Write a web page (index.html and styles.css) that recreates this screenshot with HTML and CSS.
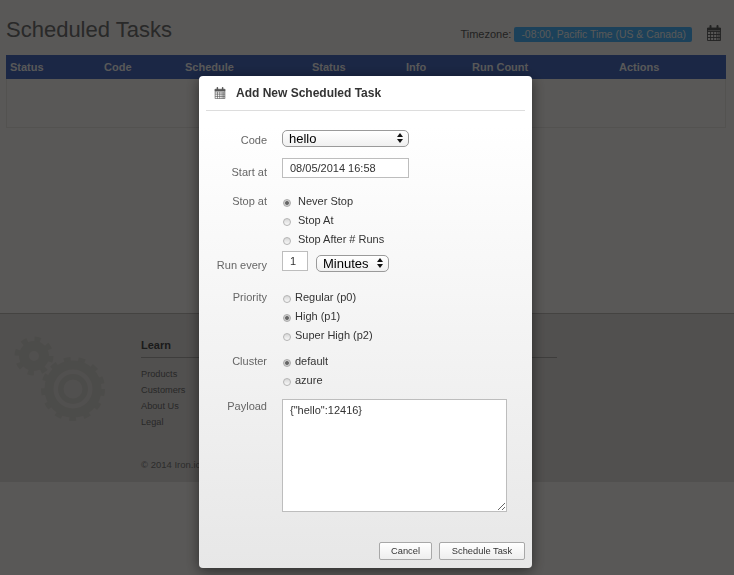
FILE: index.html
```html
<!DOCTYPE html>
<html lang="en">
<head>
  <meta charset="UTF-8">
  <title>Scheduled Tasks</title>
  <link rel="stylesheet" href="styles.css">
</head>
<body>

<div class="page">
  <div class="page-head">
    <h1>Scheduled Tasks</h1>
    <div class="tz">
      <span class="tz-label">Timezone:</span>
      <span class="tz-badge">-08:00, Pacific Time (US &amp; Canada)</span>
      <svg class="cal cal-page" viewBox="0 0 16 16"><use href="#calendar"></use></svg>
    </div>
  </div>

  <table class="tasks">
    <thead>
      <tr>
        <th class="c-status">Status</th>
        <th class="c-code">Code</th>
        <th class="c-schedule">Schedule</th>
        <th class="c-status">Status</th>
        <th class="c-info">Info</th>
        <th class="c-runs">Run Count</th>
        <th class="c-actions">Actions</th>
      </tr>
    </thead>
    <tbody>
      <tr><td colspan="7"></td></tr>
    </tbody>
  </table>
</div>

<footer class="foot">
  <svg class="gears" viewBox="0 0 110 90">
    <g class="gear">
      <circle cx="34" cy="23" r="16.5" class="teeth small-teeth"></circle>
      <circle cx="34" cy="23" r="10" class="body small-body"></circle>
    </g>
    <g class="gear">
      <circle cx="73" cy="56" r="28.5" class="teeth big-teeth"></circle>
      <circle cx="73" cy="56" r="24" class="body big-body"></circle>
      <circle cx="73" cy="56" r="12.2" class="body big-ring"></circle>
    </g>
  </svg>
  <div class="foot-col">
    <h4>Learn</h4>
    <ul>
      <li>Products</li>
      <li>Customers</li>
      <li>About Us</li>
      <li>Legal</li>
    </ul>
    <p class="copy">© 2014 Iron.io</p>
  </div>
</footer>

<div class="backdrop"></div>

<div class="modal">
  <div class="modal-head">
    <svg class="cal cal-modal" viewBox="0 0 16 16"><use href="#calendar"></use></svg>
    <h3>Add New Scheduled Task</h3>
  </div>

  <form class="form">
    <label class="lbl lbl-code">Code</label>
    <div class="ctl">
      <div class="sel sel-code">hello<span class="arrows"></span></div>
    </div>

    <label class="lbl lbl-start">Start at</label>
    <div class="ctl"><input class="txt txt-date" type="text" value="08/05/2014 16:58"></div>

    <label class="lbl lbl-plain">Stop at</label>
    <div class="ctl radios radios-wide">
      <label><input type="radio" name="stop" checked>Never Stop</label>
      <label><input type="radio" name="stop">Stop At</label>
      <label><input type="radio" name="stop">Stop After # Runs</label>
    </div>

    <label class="lbl lbl-run">Run every</label>
    <div class="ctl ctl-run">
      <input class="txt txt-num" type="text" value="1">
      <div class="sel sel-unit">Minutes<span class="arrows"></span></div>
    </div>

    <label class="lbl lbl-plain">Priority</label>
    <div class="ctl radios">
      <label><input type="radio" name="prio">Regular (p0)</label>
      <label><input type="radio" name="prio" checked>High (p1)</label>
      <label><input type="radio" name="prio">Super High (p2)</label>
    </div>

    <label class="lbl lbl-plain">Cluster</label>
    <div class="ctl radios">
      <label><input type="radio" name="cluster" checked>default</label>
      <label><input type="radio" name="cluster">azure</label>
    </div>

    <label class="lbl lbl-payload">Payload</label>
    <div class="ctl"><textarea class="payload">{"hello":12416}</textarea></div>
  </form>

  <div class="modal-foot">
    <button class="btn btn-cancel" type="button">Cancel</button>
    <button class="btn btn-go" type="button">Schedule Task</button>
  </div>
</div>

<svg class="defs" width="0" height="0">
  <symbol id="calendar" viewBox="0 0 16 16">
    <path d="M1.5 3h13v12.5h-13z M1.5 6.5h13 M1.5 9.5h13 M1.5 12.5h13 M4.6 6.5v9 M7.7 6.5v9 M10.8 6.5v9 M13 6.5v9" fill="none" stroke="currentColor" stroke-width="0.9"></path>
    <path d="M1 3h14v2.5H1z" fill="currentColor"></path>
    <path d="M4.5 1v3 M11.5 1v3" stroke="currentColor" stroke-width="2" stroke-linecap="round"></path>
  </symbol>
</svg>

</body>
</html>
```

FILE: styles.css
```css
html, body {
  margin: 0;
  height: 100%;
}
body {
  background-color: #dfdcd9;
  color: #333;
  font-family: "Liberation Sans", Arial, sans-serif;
  font-size: 11px;
  overflow: hidden;
}

.defs { position: absolute; }

.page { padding: 0 8px 0 6px; }

.page-head {
  display: flex;
  justify-content: space-between;
  height: 55px;
}
h1 {
  margin: 16px 0 0;
  font-size: 22px;
  line-height: 28px;
  font-weight: normal;
  color: #666;
}
.tz {
  display: flex;
  align-items: center;
  height: 15px;
  margin-top: 27px;
  gap: 3px;
  color: #555;
}
.tz-label { margin-bottom: 2px; }
.tz-badge {
  background-color: #48a4e0;
  color: #ddd;
  padding: 1px 6px 1px 7px;
  height: 13px;
  line-height: 13px;
  font-size: 10.4px;
  border-radius: 2px;
}
.cal { color: #333; display: block; }
.cal-page { width: 16px; height: 16px; margin: -4px 4px 0 11px; color: #555; }

.tasks {
  width: 720px;
  table-layout: fixed;
  border-collapse: separate;
  border-spacing: 0;
}
.tasks th {
  background-color: #4462ac;
  color: #ddd;
  font-size: 11px;
  text-align: left;
  padding: 0 4px;
  height: 24px;
}
.tasks td {
  height: 48px;
  padding: 0;
  border: 1px solid #cfccc9;
  border-top: none;
}
.c-status { width: 86px; }
.c-code { width: 73px; }
.c-schedule { width: 119px; }
.c-info { width: 58px; }
.c-runs { width: 139px; }

.foot {
  position: relative;
  display: flex;
  margin-top: 185px;
  height: 168px;
  background-color: #cbc8c5;
  border-top: 1px solid #aaa7a4;
}
.gears {
  width: 110px;
  height: 90px;
  margin-top: 19px;
  margin-right: 31px;
  flex: none;
}
.gear circle { fill: none; stroke: #bfbdb8; }
.small-teeth { stroke-width: 6; stroke-dasharray: 5.8 7.16; }
.big-teeth { stroke-width: 7; stroke-dasharray: 6.5 7.42; }
.small-body { stroke-width: 10; }
.big-body { stroke-width: 9; }
.big-ring { stroke-width: 5.5; }

.foot-col { width: 416px; padding-top: 25px; }
.foot-col h4 {
  margin: 0;
  font-size: 11px;
  line-height: 13px;
  color: #444;
  padding-bottom: 5px;
  border-bottom: 1px solid #9c9a97;
}
.foot-col ul {
  list-style: none;
  margin: 8px 0 0;
  padding: 0;
}
.foot-col li {
  font-size: 9.2px;
  line-height: 16px;
  color: #666;
}
.copy {
  margin: 29px 0 0;
  font-size: 9.5px;
  color: #707070;
}

.backdrop {
  position: fixed;
  left: 0;
  top: 0;
  right: 0;
  bottom: 0;
  background-color: rgba(0, 0, 0, 0.6);
}

.modal {
  position: fixed;
  left: 199px;
  top: 76px;
  width: 333px;
  height: 492px;
  box-sizing: border-box;
  padding: 0 7px;
  border-radius: 4px;
  background: linear-gradient(#fff 50px, #e7e7e7);
  box-shadow: 0 3px 14px rgba(0, 0, 0, 0.5);
}
.modal-head {
  display: flex;
  align-items: center;
  gap: 10px;
  height: 34px;
  padding-left: 8px;
  border-bottom: 1px solid #ddd;
}
.modal-head h3 {
  margin: 0;
  font-size: 12px;
  font-weight: bold;
  color: #333;
}
.cal-modal { width: 12px; height: 12px; color: #555; }

.form {
  display: grid;
  grid-template-columns: 61px 1fr;
  column-gap: 15px;
  grid-template-rows: 28px 34px 59px 37px 64px 47px 113px;
  margin-top: 19px;
}
.lbl {
  text-align: right;
  color: #666;
  font-size: 11px;
  line-height: 13px;
  padding-top: 4px;
}
.lbl-start { padding-top: 8px; }
.lbl-plain { padding-top: 3px; }
.lbl-run { padding-top: 8px; }
.lbl-payload { padding-top: 1px; }

.ctl { color: #333; }
.ctl-run {
  display: flex;
  align-items: flex-start;
  gap: 8px;
}

.sel {
  position: relative;
  box-sizing: border-box;
  height: 17px;
  line-height: 15px;
  padding-left: 6px;
  font-size: 13px;
  color: #000;
  border: 1px solid #9a9a9a;
  border-radius: 5px;
  background: linear-gradient(#fff, #f0f0f0);
}
.sel-code { width: 127px; }
.sel-unit { width: 73px; margin-top: 4px; }
.arrows {
  position: absolute;
  right: 5px;
  top: 2px;
  width: 0;
  height: 0;
  border-left: 3px solid transparent;
  border-right: 3px solid transparent;
  border-bottom: 4.5px solid #111;
}
.arrows::after {
  content: "";
  position: absolute;
  left: -3px;
  top: 5.5px;
  width: 0;
  height: 0;
  border-left: 3px solid transparent;
  border-right: 3px solid transparent;
  border-top: 4.5px solid #111;
}

.txt {
  box-sizing: border-box;
  display: block;
  margin: 0;
  border: 1px solid #bdbdbd;
  background-color: #fff;
  font-family: inherit;
  font-size: 11px;
  color: #333;
  outline: none;
}
.txt-date { width: 127px; height: 20px; padding: 0 7px; }
.txt-num { width: 26px; height: 20px; padding: 0 7px; }

.radios {
  display: flex;
  flex-direction: column;
  margin-top: -1px;
}
.radios label {
  display: flex;
  flex: none;
  align-items: center;
  height: 19px;
  gap: 4px;
}
.radios-wide label { gap: 7px; }
.radios input {
  appearance: none;
  box-sizing: border-box;
  flex: none;
  width: 8px;
  height: 8px;
  margin: 4px 0 0 1px;
  border: 1px solid #b4b4b4;
  border-radius: 50%;
  background: linear-gradient(#d8d8d8, #f8f8f8);
}
.radios input:checked {
  border-color: #aaa;
  background: radial-gradient(circle, #666 0 1.5px, #cfcfcf 2.3px);
}

.payload {
  box-sizing: border-box;
  display: block;
  width: 225px;
  height: 113px;
  padding: 4px 7px;
  margin: 0;
  border: 1px solid #bdbdbd;
  background-color: #fff;
  font-family: inherit;
  font-size: 11px;
  color: #333;
  outline: none;
}

.modal-foot {
  display: flex;
  justify-content: flex-end;
  gap: 7px;
  margin-top: 30px;
}
.btn {
  box-sizing: border-box;
  height: 18px;
  margin: 0;
  padding: 0;
  border: 1px solid #a8a8a8;
  border-radius: 2px;
  background: linear-gradient(#fff, #eee);
  font-family: inherit;
  font-size: 9.3px;
  color: #333;
}
.btn-cancel { width: 53px; }
.btn-go { width: 86px; }
```
